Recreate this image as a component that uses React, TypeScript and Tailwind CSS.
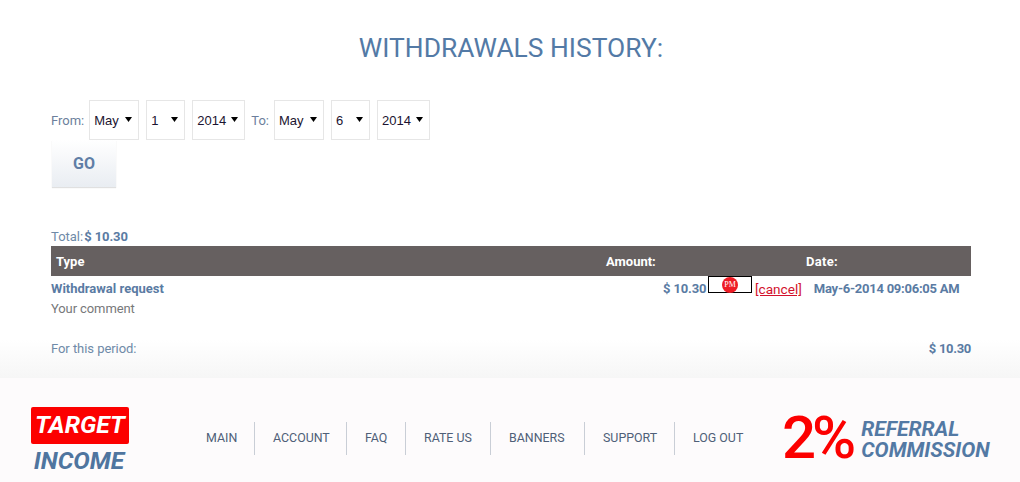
const NAV = [
  { label: 'MAIN', width: 'w-[67px]' },
  { label: 'ACCOUNT', width: 'w-[92px]' },
  { label: 'FAQ', width: 'w-[59px]' },
  { label: 'RATE US', width: 'w-[85px]' },
  { label: 'BANNERS', width: 'w-[94px]' },
  { label: 'SUPPORT', width: 'w-[90px]' },
  { label: 'LOG OUT', width: 'w-[85px]' },
];

function DateSelect({ value, width }: { value: string; width: string }) {
  return (
    <div className={`relative h-10 border border-[#e6e6e6] bg-white ${width}`}>
      <select
        defaultValue={value}
        className="h-full w-full appearance-none bg-transparent pl-[4px] pt-px font-['Liberation_Sans',sans-serif] text-[13px] text-[#1b1330] outline-none"
      >
        <option>{value}</option>
      </select>
      <svg className="absolute right-[6px] top-[16px] h-[5px] w-[7px]" viewBox="0 0 7 5">
        <path d="M0 0h7L3.5 5z" fill="#000" />
      </svg>
    </div>
  );
}

export default function App() {
  return (
    <div className="h-[482px] w-[1020px] overflow-hidden bg-white font-['Roboto',sans-serif] text-[13px] text-[#5a7ba3]">
      <main className="h-[378px] bg-[linear-gradient(to_bottom,#ffffff_0,#ffffff_340px,#f6f6f6_378px)] pl-[51px] pr-[49px]">
        <h1 className="pt-[32px] text-center text-[26.4px] leading-[32px] font-normal text-[#537aa6]">
          WITHDRAWALS HISTORY:
        </h1>

        <form className="pt-[36px]">
          <div className="flex items-center">
            <span className="mr-[5px] pt-px text-[#6c7f9c]">From:</span>
            <div className="flex gap-[7px]">
              <DateSelect value="May" width="w-[50px]" />
              <DateSelect value="1" width="w-[39px]" />
              <DateSelect value="2014" width="w-[53px]" />
            </div>
            <span className="ml-[6px] mr-[5px] pt-px text-[#6c7f9c]">To:</span>
            <div className="flex gap-[7px]">
              <DateSelect value="May" width="w-[50px]" />
              <DateSelect value="6" width="w-[39px]" />
              <DateSelect value="2014" width="w-[53px]" />
            </div>
          </div>
          <button
            type="button"
            className="ml-px block h-[47px] w-[64px] bg-[linear-gradient(to_bottom,#ffffff,#e9edf2)] text-[16px] font-bold text-[#5f7ea6] shadow-[0_1px_1px_rgba(0,0,0,0.12)]"
          >
            GO
          </button>
        </form>

        <div className="pb-px pt-[41px] leading-[17px] text-[#6f8aa8]">
          Total:<b className="ml-px tracking-[-0.1px] text-[#5a7ba3]">$ 10.30</b>
        </div>

        <div className="flex h-[30px] items-center bg-[#666060] pl-[5px] pt-px font-bold text-white">
          <span className="w-[550px]">Type</span>
          <span className="w-[200px]">Amount:</span>
          <span className="tracking-[0.3px]">Date:</span>
        </div>

        <div className="flex h-[24px] items-start font-bold">
          <span className="w-[612px] pt-[3px]">Withdrawal request</span>
          <span className="w-[43px] whitespace-nowrap pt-[3px] text-right tracking-[-0.15px]">$ 10.30</span>
          <span className="ml-[2px] flex h-[17px] w-[44px] justify-center border border-black">
            <span className="flex h-[16px] w-[16px] items-center justify-center rounded-full bg-[#ee1c25] font-['Liberation_Serif',serif] text-[8px] font-normal text-white">
              PM
            </span>
          </span>
          <a className="ml-[3px] pt-[3px] text-[13.6px] font-normal text-[#d3112c] underline">[cancel]</a>
          <span className="ml-[12px] whitespace-nowrap pt-[3px] tracking-[-0.25px]">May-6-2014 09:06:05 AM</span>
        </div>
        <div className="leading-[17px] tracking-[-0.1px] text-[#77787a]">Your comment</div>

        <div className="flex justify-between pt-[23px] leading-[17px] text-[#6f8aa8]">
          <span className="tracking-[-0.05px]">For this period:</span>
          <b className="tracking-[-0.3px] text-[#5a7ba3]">$ 10.30</b>
        </div>
      </main>

      <footer className="flex h-[104px] items-center bg-[#fdfbfc] pt-[16px]">
        <div className="ml-[31px] mt-[8px] flex w-[98px] flex-col items-center font-bold italic">
          <span className="flex h-[37px] w-[98px] items-center justify-center rounded-[2px] bg-[#fc0000] text-[24.7px] text-white">
            TARGET
          </span>
          <span className="pr-[2px] text-[24.7px] leading-[34px] text-[#4f759f]">INCOME</span>
        </div>

        <nav className="ml-[59px] flex items-center text-[12.4px] text-[#4f5f78]">
          {NAV.map((item, i) => (
            <span
              key={item.label}
              className={`flex h-[33px] items-center pl-[18px] ${item.width} ${i < NAV.length - 1 ? 'border-r border-[#c9ced6]' : ''}`}
            >
              {item.label}
            </span>
          ))}
        </nav>

        <div className="ml-[22px] flex items-center">
          <span className="text-[60px] leading-none font-medium tracking-[-4px] text-[#fc0000]">2%</span>
          <span className="ml-[9px] mt-[3px] text-[21px] leading-[21px] font-bold italic text-[#5379a4]">
            REFERRAL
            <br />
            COMMISSION
          </span>
        </div>
      </footer>
    </div>
  );
}
